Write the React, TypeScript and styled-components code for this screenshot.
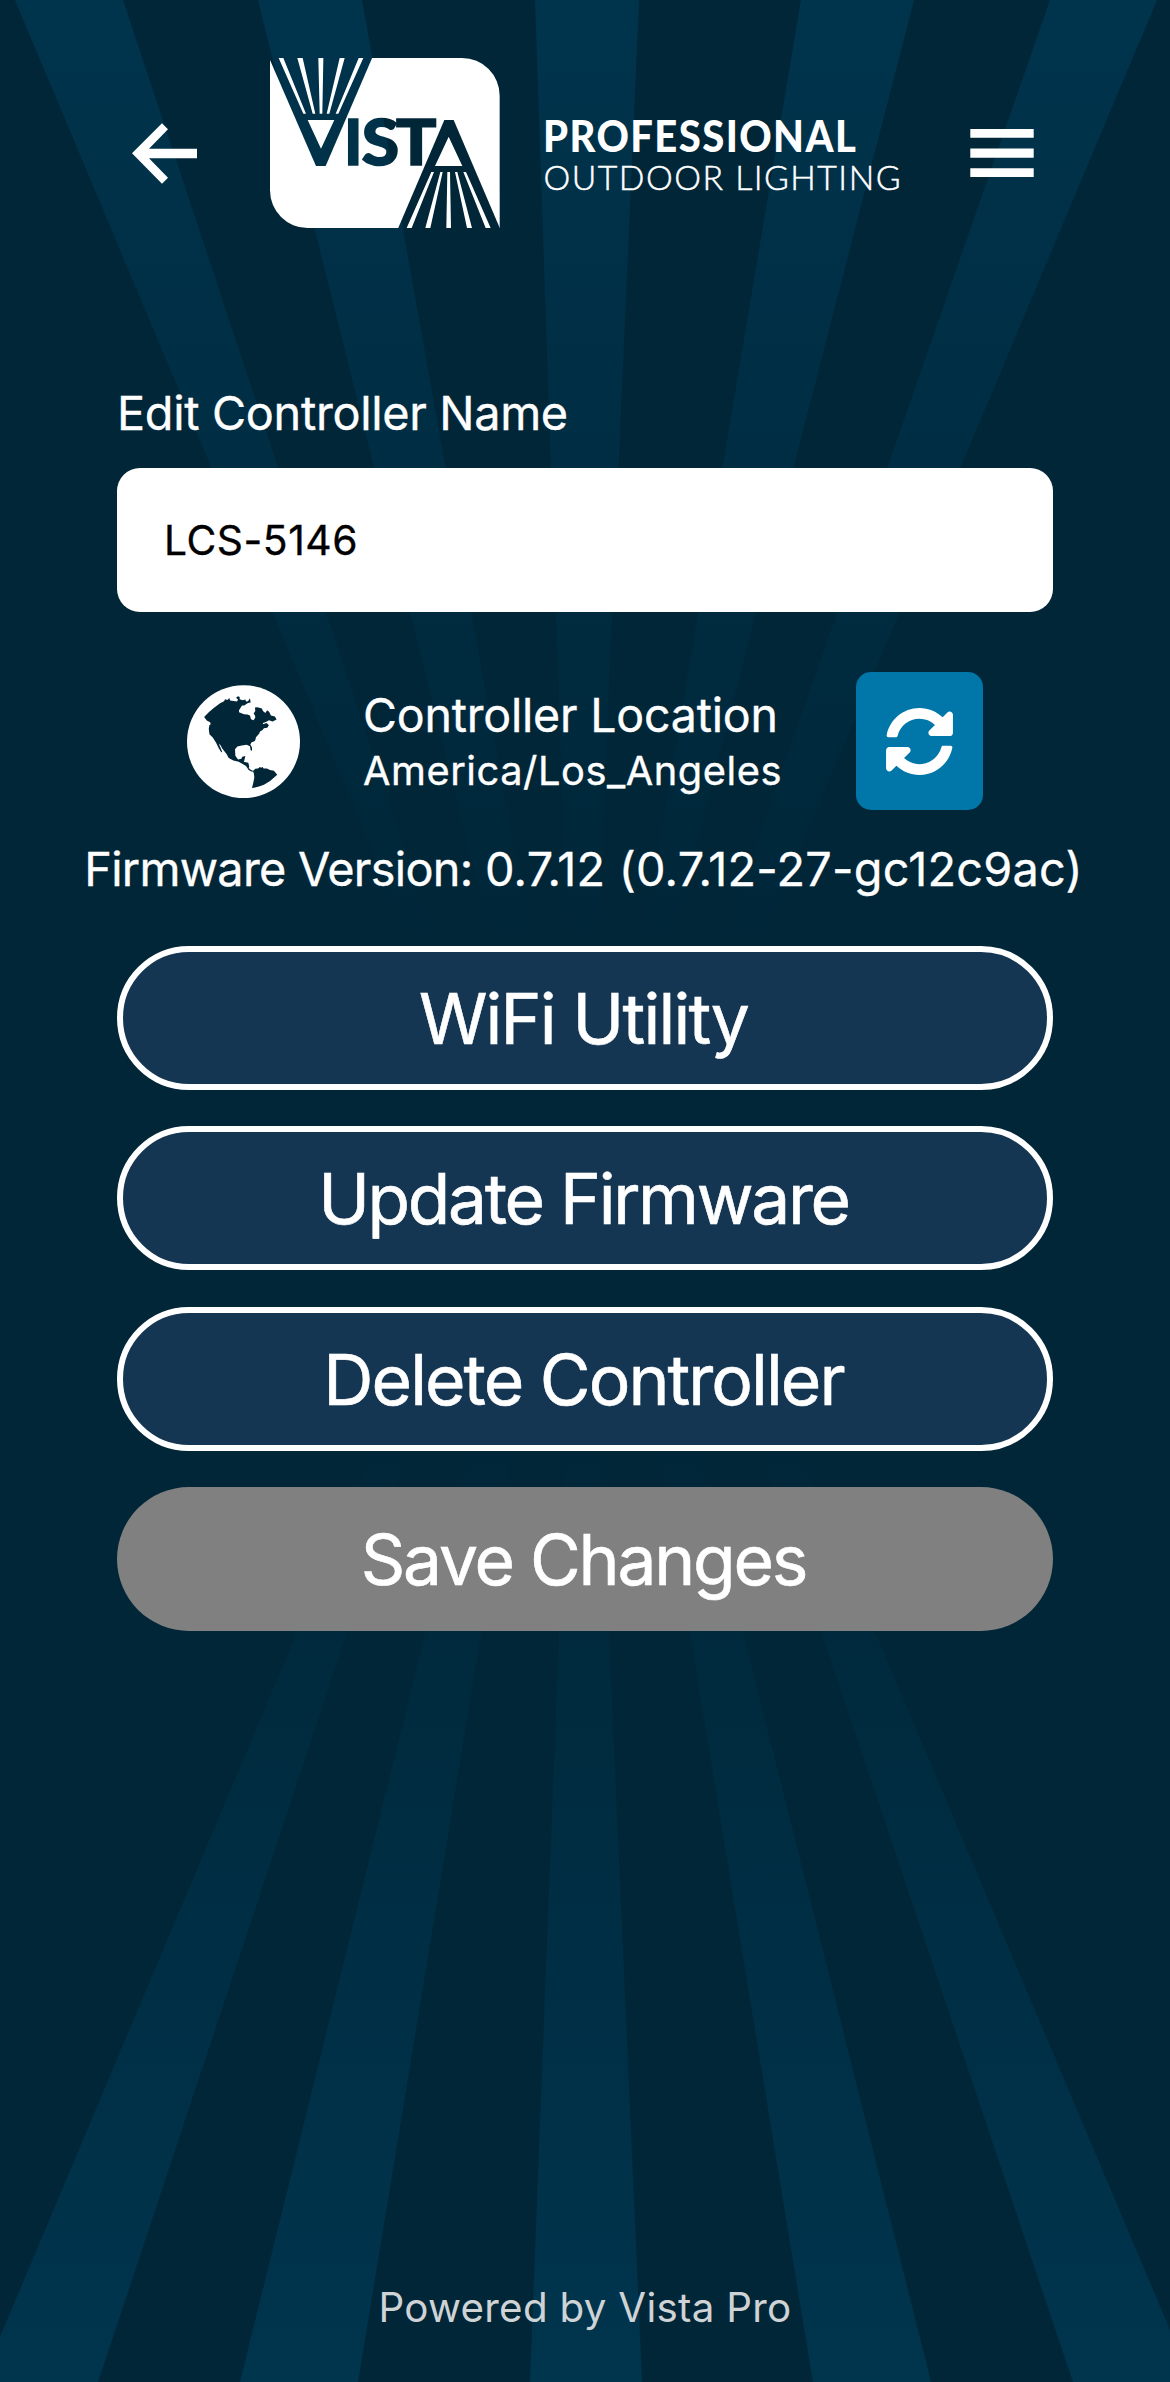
import React from "react";
import { FaSyncAlt } from "react-icons/fa";
import styled, { createGlobalStyle } from "styled-components";

const GlobalStyle = createGlobalStyle`
  *, *::before, *::after { box-sizing: border-box; }
  body {
    margin: 0;
    background: #002638;
    color: #fff;
    font-family: Inter, "Liberation Sans", sans-serif;
  }
`;

const Page = styled.div`
  position: relative;
  width: 1170px;
  height: 2382px;
  overflow: hidden;
  display: flex;
  flex-direction: column;
  align-items: center;
  background: #002638;
`;

const Backdrop = styled.svg`
  position: absolute;
  inset: 0;
  width: 100%;
  height: 100%;
`;

const Header = styled.header`
  position: relative;
  display: flex;
  align-items: center;
  width: 100%;
  height: 228px;
  padding: 58px 136px 0 132px;
`;

const IconButton = styled.button`
  display: flex;
  margin: 20px 0 0;
  padding: 0;
  border: 0;
  background: none;
  color: #fff;
`;

const Logo = styled.svg`
  display: block;
  margin: 0 auto 0 72px;
`;

const Form = styled.main`
  position: relative;
  display: flex;
  flex-direction: column;
  width: 936px;
  margin-top: 155px;
  -webkit-text-stroke: 0.35px currentColor;
`;

const Label = styled.label`
  font-size: 46.8px;
  line-height: 60px;
  letter-spacing: -0.32px;
`;

const NameInput = styled.input`
  height: 144px;
  margin-top: 25px;
  padding: 0 47px;
  border: 0;
  border-radius: 23px;
  outline: none;
  background: #fff;
  color: #000;
  font: 400 40.8px/1.2 Inter, "Liberation Sans", sans-serif;
  letter-spacing: 0.55px;
`;

const LocationRow = styled.section`
  display: flex;
  align-items: center;
  height: 138px;
  margin-top: 60px;
  padding: 0 70px;
`;

const LocationText = styled.div`
  flex: 1;
  padding: 4px 0 0 63px;
  white-space: nowrap;
`;

const LocationTitle = styled.div`
  font-size: 46.5px;
  line-height: 55px;
  letter-spacing: -0.2px;
`;

const LocationZone = styled.div`
  font-size: 39.8px;
  line-height: 55px;
  letter-spacing: 0.55px;
`;

const RefreshButton = styled.button`
  display: flex;
  align-items: center;
  justify-content: center;
  width: 127px;
  height: 138px;
  padding: 0;
  border: 0;
  border-radius: 15px;
  background: #0076a9;
  color: #fff;
  font-size: 69px;
`;

const Firmware = styled.p`
  align-self: center;
  margin: 29px 3px 0 0;
  font-size: 46.8px;
  line-height: 60px;
  letter-spacing: -0.7px;
  white-space: nowrap;
`;

const Version = styled.span`
  letter-spacing: 0.25px;
`;

const Actions = styled.div`
  display: flex;
  flex-direction: column;
  gap: 36.4px;
  margin-top: 47px;
`;

const ActionButton = styled.button<{ $muted?: boolean; $tracking: number }>`
  height: 144px;
  padding: 3px 3px 0 0;
  border: ${(p) => (p.$muted ? "0" : "6px solid #fff")};
  border-radius: 72px;
  background: ${(p) => (p.$muted ? "#808080" : "#153652")};
  color: #fff;
  font: 400 69.5px/1.2 Inter, "Liberation Sans", sans-serif;
  letter-spacing: ${(p) => p.$tracking}px;
  -webkit-text-stroke: 0.6px currentColor;
`;

const Footer = styled.footer`
  position: relative;
  margin: auto 0 44px;
  color: #cfd3d5;
  font-size: 40.3px;
  line-height: 60px;
  letter-spacing: 0.3px;
`;

const topRays = [
  "15,0 123,0 433,935 408,935",
  "258,0 362,0 529,935 490,935",
  "535,0 639,0 598,935 567,935",
  "801,0 914,0 673,935 644,935",
  "1050,0 1157,0 764,935 725,935",
];

const bottomRays = [
  "-19,2382 98,2382 407,1452 373,1452",
  "240,2382 358,2382 511,1452 470,1452",
  "530,2382 642,2382 601,1452 566,1452",
  "813,2382 931,2382 698,1452 660,1452",
  "1073,2382 1192,2382 799,1452 761,1452",
];

function Rays() {
  return (
    <Backdrop viewBox="0 0 1170 2382" aria-hidden="true">
      <defs>
        <linearGradient id="fadeDown" gradientUnits="userSpaceOnUse" x1="0" y1="0" x2="0" y2="960">
          <stop offset="0" stopColor="#00344d" />
          <stop offset="1" stopColor="#00344d" stopOpacity="0" />
        </linearGradient>
        <linearGradient id="fadeUp" gradientUnits="userSpaceOnUse" x1="0" y1="2382" x2="0" y2="1400">
          <stop offset="0" stopColor="#00354e" />
          <stop offset="1" stopColor="#00354e" stopOpacity="0" />
        </linearGradient>
      </defs>
      <g fill="url(#fadeDown)">
        {topRays.map((p) => <polygon key={p} points={p} />)}
      </g>
      <g fill="url(#fadeUp)">
        {bottomRays.map((p) => <polygon key={p} points={p} />)}
      </g>
    </Backdrop>
  );
}

function BackArrow() {
  return (
    <svg width="66" height="61" viewBox="98 97 198 183" fill="#fff">
      <path d="M98 188L188 98L206 116L149 174.500H293V203H149L206 261L188 279Z" />
    </svg>
  );
}

function MenuBars() {
  return (
    <svg width="64" height="48" viewBox="0 0 64 48" fill="#fff">
      <path d="M0.300 0H63.700V8.800H0.300ZM0.300 19.500H63.700V28.700H0.300ZM0.300 39.200H63.700V48H0.300Z" />
    </svg>
  );
}

function VistaLogo() {
  return (
    <Logo width="632" height="170" viewBox="0 0 632 170" role="img" aria-label="Vista Professional Outdoor Lighting">
      <defs>
        <mask id="emblem" maskUnits="userSpaceOnUse" x="60" y="54" width="690" height="510">
          <path fill="#fff" d="M60 54H636A113 113 0 0 1 749 167V564H173A113 113 0 0 1 60 451Z" />
          <path fill="#000" d="M60 50H368L227 378H198L60 60Z" />
          <path fill="#000" d="M583 240H611L751 568H443Z" />
          <path
            fill="#fff"
            d="M173 240H253L213 326ZM86 54H100L168 221H160ZM142 54H158L196 221H188ZM205 54H220L217 221H209ZM269 54H284L238 221H230ZM326 54H340L265 221H257Z"
          />
          <path
            fill="#fff"
            d="M596 290L637 378H555ZM544 396H552L485 564H470ZM571 396H578L541 564H526ZM592 396H600L603 564H589ZM615 396H622L666 564H651ZM640 396H648L722 564H707Z"
          />
          <g fill="#000" stroke="#000" strokeWidth="5" fontFamily="Lato, sans-serif" fontWeight="900" fontSize="186">
            <text x="283" y="376" textLength="54" lengthAdjust="spacingAndGlyphs">I</text>
            <text x="335" y="376" textLength="112" lengthAdjust="spacingAndGlyphs">S</text>
            <text x="438" y="376" textLength="121" lengthAdjust="spacingAndGlyphs">T</text>
          </g>
        </mask>
      </defs>
      <g transform="scale(.33333) translate(-60 -54)">
        <rect x="60" y="54" width="690" height="510" fill="#fff" mask="url(#emblem)" />
      </g>
      <g fill="#fff" stroke="#fff" fontFamily="Lato, sans-serif">
        <text
          transform="translate(273 94) scale(.92 1)"
          fontSize="43.500"
          fontWeight="900"
          strokeWidth="0"
          textLength="340"
          lengthAdjust="spacing"
        >
          PROFESSIONAL
        </text>
        <text x="273.500" y="131.700" fontSize="33.800" fontWeight="300" strokeWidth="0.500" textLength="357" lengthAdjust="spacing">
          OUTDOOR LIGHTING
        </text>
      </g>
    </Logo>
  );
}

function GlobeIcon() {
  return (
    <svg width="113" height="114" viewBox="50.500 71 340 343" role="img" aria-label="Globe">
      <circle cx="220.500" cy="244.500" r="170" fill="#fff" />
      <g fill="#002638">
        <path d="M102 170L116 156L130 144L150 129L162 123L165 117L172 119L178 113L180 121L190 122L201 124L204 118L198 112L204 108L209 110L209 117L218 120L226 118L228 124L234 123L240 114L242 127L234 128L227 133L223 136L216 136L207 150L207 156L222 162L232 163L240 166L243 177L251 180L256 172L255 166L251 160L256 152L255 142L262 141L276 145L279 152L286 158L292 150L298 155L303 166L315 169L320 178L308 184L297 180L288 185L279 188V192L290 188L297 195L292 203L282 204L277 210L270 214L268 220L258 231L256 240L252 244L245 246L241 253L246 262V272L242 270L240 258L230 254L215 256L202 259L195 267L196 287L204 298L214 296L217 290L226 288L223 301L221 305L235 308L238 320L236 324L243 330L249 332L247 336L236 330L228 318L218 312L206 305L190 301L176 294L170 282L156 264L152 256L146 250L156 274L154 277L146 264L138 248L128 232L118 222L116 206L118 194L122 192L120 186L110 181Z" />
        <path d="M249 333L256 326L264 325L270 321L274 323L278 321L281 325L291 325L300 330L312 332L322 344Q302 364 282 374Q264 382 246 384L250 368L253 352L252 342Z" />
      </g>
    </svg>
  );
}

export default function App() {
  return (
    <>
      <GlobalStyle />
      <Page>
        <Rays />
        <Header>
          <IconButton aria-label="Back"><BackArrow /></IconButton>
          <VistaLogo />
          <IconButton aria-label="Menu"><MenuBars /></IconButton>
        </Header>
        <Form>
          <Label htmlFor="controller-name">Edit Controller Name</Label>
          <NameInput id="controller-name" defaultValue="LCS-5146" />
          <LocationRow>
            <GlobeIcon />
            <LocationText>
              <LocationTitle>Controller Location</LocationTitle>
              <LocationZone>America/Los_Angeles</LocationZone>
            </LocationText>
            <RefreshButton aria-label="Refresh location"><FaSyncAlt /></RefreshButton>
          </LocationRow>
          <Firmware>
            Firmware Version: <Version>0.7.12 (0.7.12-27-gc12c9ac)</Version>
          </Firmware>
          <Actions>
            <ActionButton $tracking={-1.8}>WiFi Utility</ActionButton>
            <ActionButton $tracking={-2.32}>Update Firmware</ActionButton>
            <ActionButton $tracking={-1.95}>Delete Controller</ActionButton>
            <ActionButton $muted $tracking={-2.22}>Save Changes</ActionButton>
          </Actions>
        </Form>
        <Footer>Powered by Vista Pro</Footer>
      </Page>
    </>
  );
}
